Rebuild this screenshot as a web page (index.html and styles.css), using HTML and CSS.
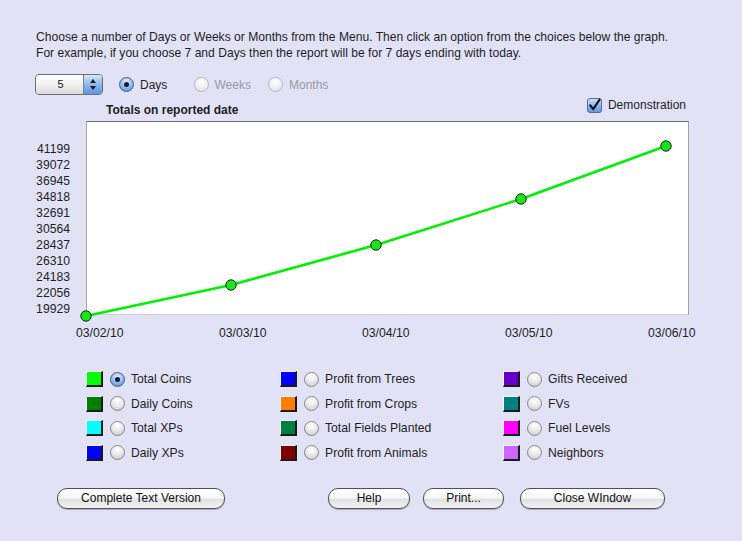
FILE: index.html
```
<!DOCTYPE html>
<html>
<head>
<meta charset="utf-8">
<link rel="stylesheet" href="styles.css">
</head>
<body>
<div class="page">
  <div class="intro">
    <p>Choose a number of Days or Weeks or Months from the Menu. Then click an option from the choices below the graph.</p>
    <p>For example, if you choose 7 and Days then the report will be for 7 days ending with today.</p>
  </div>

  <div class="controls">
    <div class="spinner">
      <span class="spin-value">5</span>
      <span class="spin-arrows">
        <svg width="18" height="19" viewBox="0 0 18 19"><path d="M6 8 L9 4 L12 8 Z" fill="#1a1a1a"/><path d="M6 11 L9 15 L12 11 Z" fill="#1a1a1a"/></svg>
      </span>
    </div>
    <label class="opt"><span class="radio on"></span>Days</label>
    <label class="opt disabled"><span class="radio"></span>Weeks</label>
    <label class="opt disabled"><span class="radio"></span>Months</label>
  </div>

  <div class="chart-area">
    <div class="chart-head">
      <span class="chart-title">Totals on reported date</span>
      <label class="check">
        <svg class="checkbox" width="15" height="15" viewBox="0 0 15 15">
          <defs>
            <linearGradient id="cb" x1="0" y1="0" x2="0" y2="1">
              <stop offset="0" stop-color="#cfe3fb"/>
              <stop offset="0.5" stop-color="#8fb9ee"/>
              <stop offset="1" stop-color="#5d95df"/>
            </linearGradient>
          </defs>
          <rect x="0.5" y="0.5" width="14" height="14" rx="2.5" fill="url(#cb)" stroke="#5a6f8f"/>
          <path d="M3.2 7.4 L6.2 11.2 L12.6 1.6" fill="none" stroke="#111" stroke-width="2.1" stroke-linecap="round" stroke-linejoin="round"/>
        </svg>
        Demonstration
      </label>
    </div>
    <div class="y-labels">
      <span>41199</span><span>39072</span><span>36945</span><span>34818</span><span>32691</span><span>30564</span><span>28437</span><span>26310</span><span>24183</span><span>22056</span><span>19929</span>
    </div>
    <div class="chart">
      <svg class="plot" width="601" height="192" viewBox="0 0 601 192">
        <polyline points="-1,194 144,163 289,123 434,77 579,24" fill="none" stroke="#00f000" stroke-width="2.6" stroke-linejoin="round"/>
        <g fill="#19e619" stroke="#102810" stroke-width="1">
          <circle cx="-1" cy="194" r="5.2"/>
          <circle cx="144" cy="163" r="5.2"/>
          <circle cx="289" cy="123" r="5.2"/>
          <circle cx="434" cy="77" r="5.2"/>
          <circle cx="579" cy="24" r="5.2"/>
        </g>
      </svg>
    </div>
    <div class="x-labels">
      <span>03/02/10</span><span>03/03/10</span><span>03/04/10</span><span>03/05/10</span><span>03/06/10</span>
    </div>
  </div>

  <div class="legend">
    <label class="item"><span class="sw" style="background:#00ff00"></span><span class="radio on"></span>Total Coins</label>
    <label class="item"><span class="sw" style="background:#0000ff"></span><span class="radio"></span>Profit from Trees</label>
    <label class="item"><span class="sw" style="background:#6600cc"></span><span class="radio"></span>Gifts Received</label>

    <label class="item"><span class="sw" style="background:#008000"></span><span class="radio"></span>Daily Coins</label>
    <label class="item"><span class="sw" style="background:#ff8000"></span><span class="radio"></span>Profit from Crops</label>
    <label class="item"><span class="sw" style="background:#008080"></span><span class="radio"></span>FVs</label>

    <label class="item"><span class="sw" style="background:#00ffff"></span><span class="radio"></span>Total XPs</label>
    <label class="item"><span class="sw" style="background:#008040"></span><span class="radio"></span>Total Fields Planted</label>
    <label class="item"><span class="sw" style="background:#ff00ff"></span><span class="radio"></span>Fuel Levels</label>

    <label class="item"><span class="sw" style="background:#0000ff"></span><span class="radio"></span>Daily XPs</label>
    <label class="item"><span class="sw" style="background:#800000"></span><span class="radio"></span>Profit from Animals</label>
    <label class="item"><span class="sw" style="background:#cc66ff"></span><span class="radio"></span>Neighbors</label>
  </div>

  <div class="buttons">
    <button class="btn btn-text">Complete Text Version</button>
    <button class="btn btn-help">Help</button>
    <button class="btn btn-print">Print...</button>
    <button class="btn btn-close">Close WIndow</button>
  </div>
</div>
</body>
</html>
```

FILE: styles.css
```
html, body {
  margin: 0;
  padding: 0;
}
body {
  background: #e2e2f6;
  font-family: "Liberation Sans", Arial, sans-serif;
  font-size: 12px;
  color: #1e1e1e;
  width: 742px;
  height: 541px;
  overflow: hidden;
}
.page {
  padding-top: 29px;
}
.intro {
  padding-left: 36px;
}
.intro p {
  margin: 0;
  line-height: 16px;
  font-size: 12.1px;
}

.controls {
  display: flex;
  align-items: center;
  margin: 13px 0 0 35px;
  height: 21px;
}
.spinner {
  display: flex;
  width: 68px;
  height: 21px;
  box-sizing: border-box;
  border: 1px solid #6d6d78;
  border-radius: 4px;
  overflow: hidden;
  margin-right: 16px;
}
.spin-value {
  flex: 1;
  text-align: center;
  line-height: 19px;
  font-size: 11px;
  background: linear-gradient(#ffffff, #f1f1f1 50%, #d9d9d9);
  color: #111;
  padding-left: 2px;
}
.spin-arrows {
  width: 18px;
  border-left: 1px solid #6d7ea0;
  background: linear-gradient(#d6e7fb, #8db8ee 50%, #5e97e2);
  display: flex;
  align-items: center;
}
.opt {
  display: flex;
  align-items: center;
  width: 74.5px;
  flex: none;
}
.opt .radio {
  margin-right: 6px;
}
.opt.disabled {
  color: #9a9aa4;
}
.opt.disabled .radio {
  border-color: #b6b6c0;
  background: radial-gradient(circle at 50% 30%, #ffffff, #f0f0f4 50%, #dadae2);
}

.radio {
  display: inline-block;
  width: 15px;
  height: 15px;
  box-sizing: border-box;
  border-radius: 50%;
  border: 1px solid #8a8a8a;
  background: radial-gradient(circle at 50% 25%, #ffffff, #ececec 45%, #c4c4c4);
  position: relative;
  flex: none;
}
.radio.on {
  border-color: #4a5d80;
  background: radial-gradient(circle at 50% 30%, #e6f0fd, #9cc2f1 45%, #4b87d6);
}
.radio.on::after {
  content: "";
  position: absolute;
  left: 4px;
  top: 4px;
  width: 5px;
  height: 5px;
  border-radius: 50%;
  background: #15182a;
}

.chart-area {
  display: grid;
  grid-template-columns: 86px 603px;
  grid-template-rows: 26px 194px auto;
}
.chart-head {
  grid-column: 2;
  grid-row: 1;
  display: flex;
  justify-content: space-between;
  align-items: flex-start;
  padding: 2px 3px 0 20px;
}
.chart-title {
  font-weight: bold;
  padding-top: 6px;
}
.check {
  display: flex;
  align-items: center;
  gap: 6px;
  line-height: 15px;
  padding-top: 1px;
}
.checkbox {
  display: block;
}
.y-labels {
  grid-column: 1;
  grid-row: 2;
  display: flex;
  flex-direction: column;
  align-items: flex-end;
  padding: 20px 16px 0 0;
}
.y-labels span {
  line-height: 16px;
  font-size: 12.2px;
}
.chart {
  grid-column: 2;
  grid-row: 2;
  box-sizing: border-box;
  background: #ffffff;
  border-top: 1px solid #6e6e74;
  border-left: 1px solid #a8a8ae;
  border-right: 1px solid #a0a0a6;
  border-bottom: 1px solid #cfcfd8;
}
.plot {
  display: block;
  overflow: visible;
}
.x-labels {
  grid-column: 2;
  grid-row: 3;
  display: grid;
  grid-template-columns: repeat(4, 143px) auto;
  margin: 10px 0 0 -10px;
}
.x-labels span {
  line-height: 16px;
  font-size: 12.2px;
}

.legend {
  display: grid;
  grid-template-columns: 194px 223px auto;
  grid-auto-rows: 24.5px;
  margin: 26px 0 0 86px;
}
.item {
  display: flex;
  align-items: center;
  font-size: 12.2px;
}
.sw {
  display: inline-block;
  width: 17px;
  height: 16px;
  box-sizing: border-box;
  border-top: 1px solid #f4f4ff;
  border-left: 1px solid #f4f4ff;
  border-right: 2px solid #1a1a1a;
  border-bottom: 2px solid #1a1a1a;
  margin-right: 7px;
  flex: none;
}
.item .radio {
  margin-right: 6px;
}

.buttons {
  display: flex;
  margin: 23px 0 0 57px;
}
.btn {
  height: 21px;
  box-sizing: border-box;
  border: 1px solid #4e4e55;
  border-radius: 10px;
  background: linear-gradient(#ffffff, #f7f7f7 45%, #e2e2e2 55%, #f2f2f2);
  font-family: "Liberation Sans", Arial, sans-serif;
  font-size: 12px;
  color: #111;
  padding: 0;
  line-height: 19px;
  box-shadow: 0 1px 1px rgba(0,0,0,0.25);
}
.btn-text { width: 168px; }
.btn-help { width: 82px; margin-left: 103px; }
.btn-print { width: 81px; margin-left: 13px; }
.btn-close { width: 145px; margin-left: 16px; }
```
